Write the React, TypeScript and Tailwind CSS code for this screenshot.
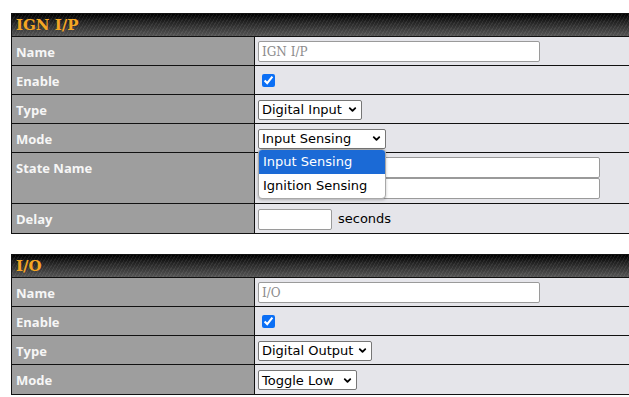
import { ChevronDown } from 'lucide-react'
import type { ReactNode } from 'react'

function Section({ title, children }: { title: string; children: ReactNode }) {
  return (
    <div className="w-[640px] border border-[#111]">
      {/* 見出しバー */}
      <div className="h-[23px] border-b border-[#111] bg-[image:repeating-linear-gradient(120deg,rgba(255,255,255,0.07)_0px,rgba(255,255,255,0.07)_1px,transparent_1px,transparent_3px),linear-gradient(to_bottom,#000_0%,#222_35%,#555_100%)] flex items-center pl-[4px] pt-[1px]">
        <span className="text-[15px] font-bold text-[#f5a623] leading-none font-[family-name:DejaVu_Serif,Liberation_Serif,serif]">{title}</span>
      </div>
      {children}
    </div>
  )
}

function Row({ label, children, tall }: { label: string; children: ReactNode; tall?: boolean }) {
  return (
    <div className={`flex border-b border-[#111] last:border-b-0 ${tall ? 'h-[51px]' : 'h-[29px]'}`}>
      <div className="w-[243px] shrink-0 bg-[#9e9e9e] border-r border-[#111] pl-[4px] pt-[6px] text-[13px] font-bold text-[#f6f6f6] leading-[18px] font-[family-name:Open_Sans,Liberation_Sans,sans-serif]">
        {label}
      </div>
      <div className={`flex-1 bg-[#e5e5ea] flex pl-[3px] text-[13px] text-black font-[family-name:DejaVu_Sans,sans-serif] ${tall ? 'items-start pt-[4px]' : 'items-center pt-[1px]'}`}>
        {children}
      </div>
    </div>
  )
}

function TextBox({ placeholder, width }: { placeholder?: string; width: string }) {
  return (
    <input
      type="text"
      placeholder={placeholder}
      className={`${width} h-[21px] bg-white border border-[#9a9a9a] rounded-[2px] px-[3px] text-[12px] font-[family-name:DejaVu_Serif,Liberation_Serif,serif] placeholder:text-[#8c8c8c] outline-none`}
    />
  )
}

function Select({ value, width }: { value: string; width: string }) {
  return (
    <div className={`${width} h-[20px] bg-white border border-[#767676] rounded-[2px] flex items-center justify-between pl-[3px] pr-[3px]`}>
      <span className="leading-none">{value}</span>
      <ChevronDown size={11} strokeWidth={4} />
    </div>
  )
}

function Check() {
  return <input type="checkbox" defaultChecked className="ml-[4px] w-[13px] h-[13px] accent-[#0b6ff5]" />
}

export default function App() {
  return (
    <div className="w-[629px] h-[397px] overflow-hidden bg-white pt-[13px] pl-[11px]">
      <Section title="IGN I/P">
        <Row label="Name">
          <TextBox placeholder="IGN I/P" width="w-[282px]" />
        </Row>
        <Row label="Enable">
          <Check />
        </Row>
        <Row label="Type">
          <Select value="Digital Input" width="w-[104px]" />
        </Row>
        <Row label="Mode">
          <div className="relative">
            <Select value="Input Sensing" width="w-[128px]" />
            {/* 開いたドロップダウン */}
            <div className="absolute left-0 top-[20px] z-10 w-[128px] bg-white border border-[#a8a8a8] rounded-[4px] shadow-[0_1px_3px_rgba(0,0,0,0.25)] overflow-hidden">
              <div className="h-[24px] bg-[#1b6ad6] text-white flex items-center pl-[4px]">Input Sensing</div>
              <div className="h-[24px] flex items-center pl-[4px]">Ignition Sensing</div>
            </div>
          </div>
        </Row>
        <Row label="State Name" tall>
          <div className="flex flex-col pl-[60px]">
            <TextBox width="w-[282px]" />
            <TextBox width="w-[282px]" />
          </div>
        </Row>
        <Row label="Delay">
          <TextBox width="w-[74px]" />
          <span className="ml-[6px]">seconds</span>
        </Row>
      </Section>

      <div className="h-[20px]" />

      <Section title="I/O">
        <Row label="Name">
          <TextBox placeholder="I/O" width="w-[282px]" />
        </Row>
        <Row label="Enable">
          <Check />
        </Row>
        <Row label="Type">
          <Select value="Digital Output" width="w-[114px]" />
        </Row>
        <Row label="Mode">
          <Select value="Toggle Low" width="w-[99px]" />
        </Row>
      </Section>
    </div>
  )
}
